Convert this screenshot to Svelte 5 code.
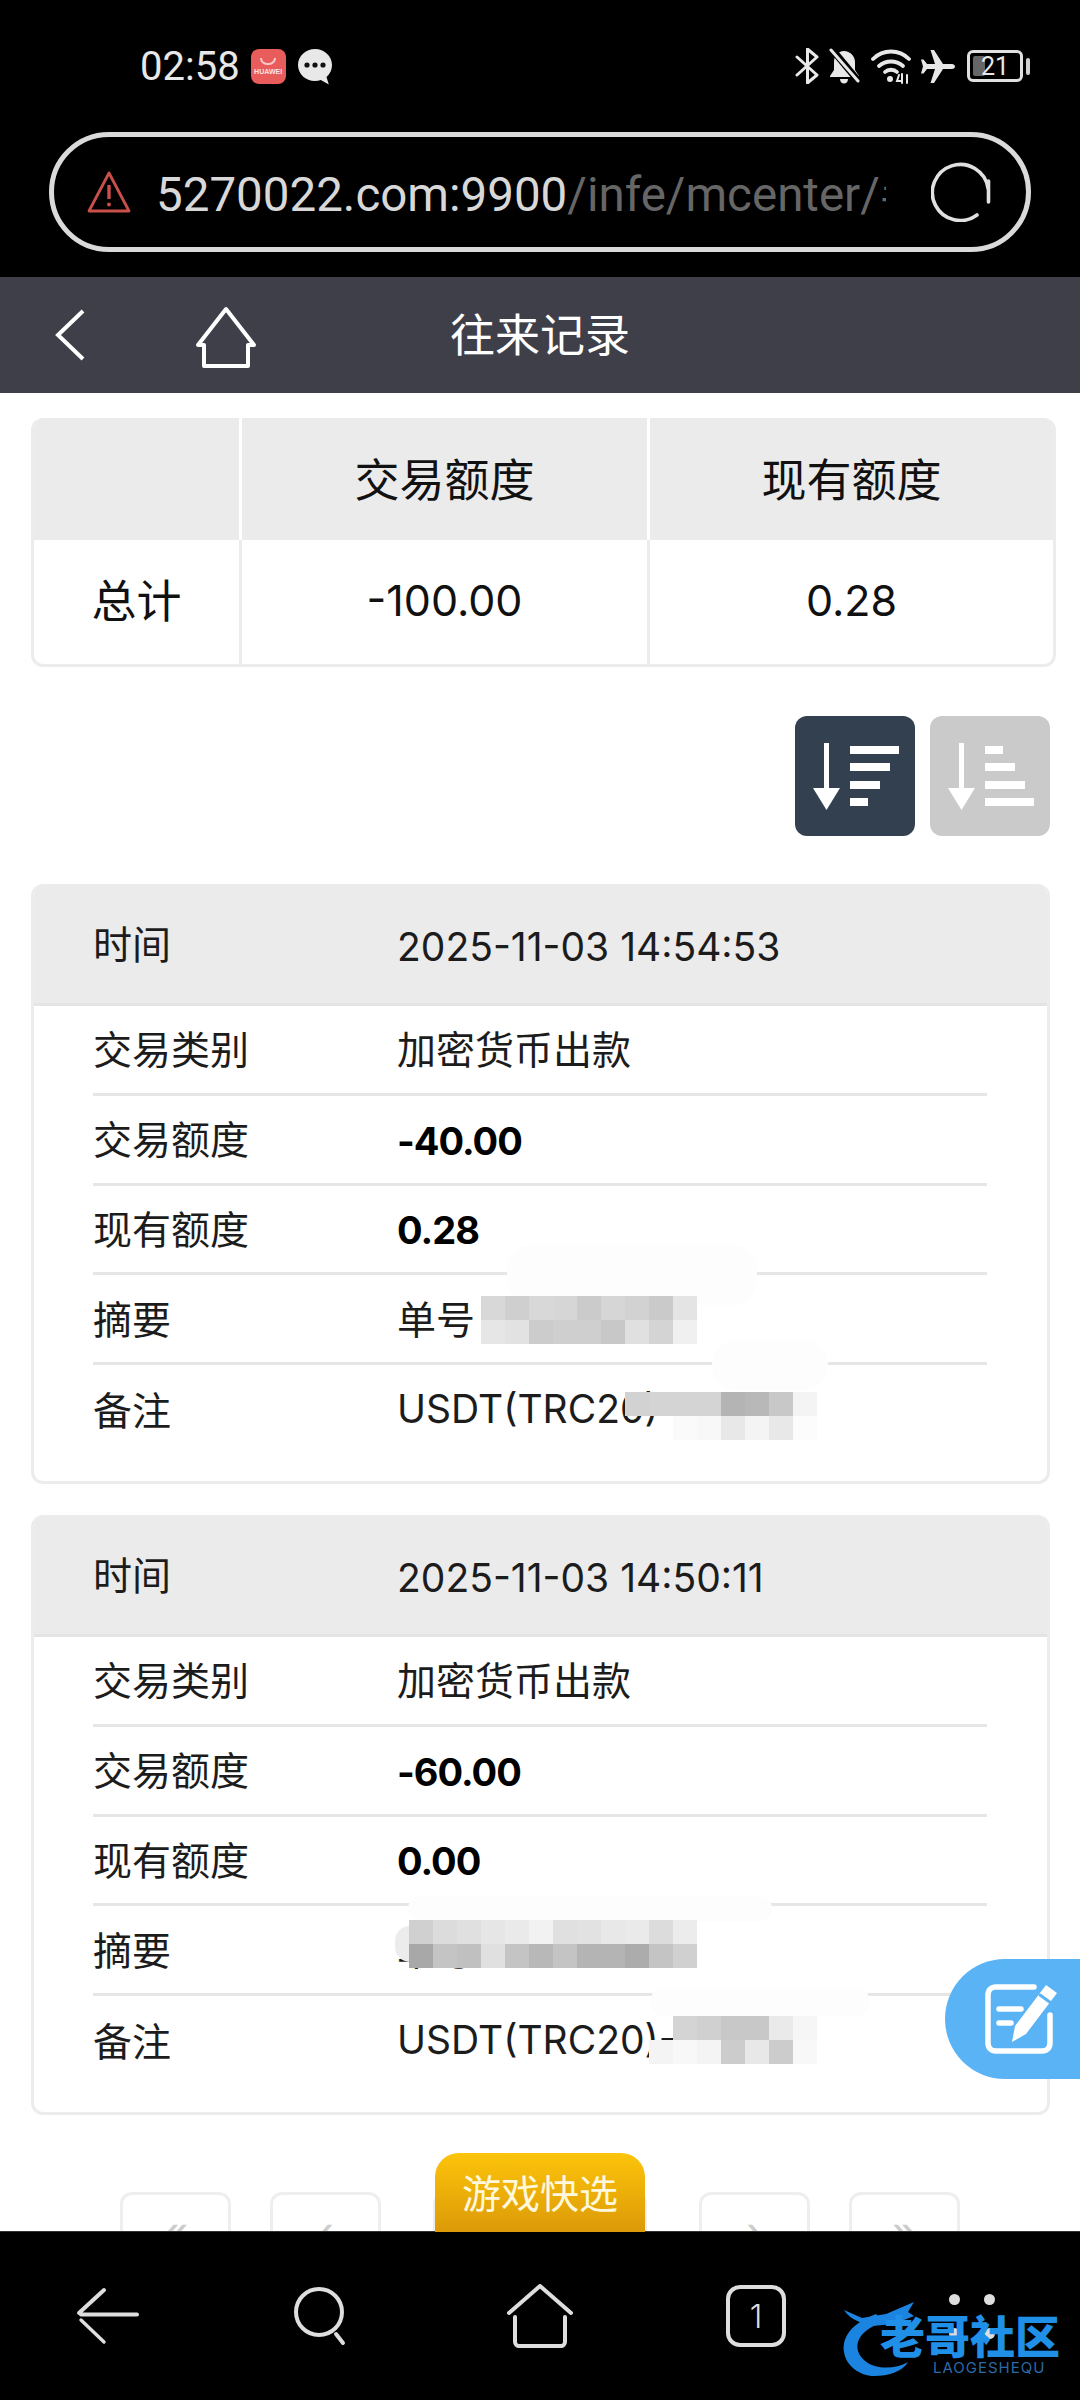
<script>
    const cards = [
        { time: "2025-11-03 14:54:53", amount: "-40.00", balance: "0.28" },
        { time: "2025-11-03 14:50:11", amount: "-60.00", balance: "0.00" },
    ];

    // redacted bits of the screenshot: smudges first, then mosaic tiles
    const smudges = [
        { x: 507, y: 1245, w: 250, h: 60, bg: "#fdfdfd" },
        { x: 712, y: 1340, w: 116, h: 50, bg: "#fdfdfd" },
        { x: 408, y: 1896, w: 364, h: 26, bg: "#fdfdfd" },
        { x: 650, y: 1988, w: 220, h: 28, bg: "#fdfdfd" },
        { x: 395, y: 1926, w: 30, h: 36, bg: "#ececec" },
    ];
    const mosaics = [
        { x: 457, y: 1296, rows: [
            ["", "d8", "cf", "d8", "d6", "cb", "d6", "d2", "ca", "e4"],
            ["", "e6", "e2", "cc", "cf", "cf", "c8", "e0", "d4", "f0"],
        ] },
        { x: 625, y: 1392, rows: [
            ["d2", "d4", "d4", "d4", "b4", "b8", "c8", "f4"],
            ["", "", "fa", "f8", "e8", "f4", "e8", "fc"],
        ] },
        { x: 409, y: 1920, rows: [
            ["d0", "dc", "e0", "e6", "ea", "f2", "e0", "e2", "e8", "ea", "dc", "ec"],
            ["a8", "c4", "c0", "e0", "c4", "b8", "c4", "b4", "b4", "ac", "c4", "d0"],
        ] },
        { x: 625, y: 2016, rows: [
            ["", "", "d4", "d0", "c8", "c8", "ea", "f6"],
            ["", "f4", "f8", "f4", "cc", "e8", "cc", "f8"],
        ] },
    ];
</script>

<div class="page">
    <div class="browser">
        <div class="status">
            <span class="clock">02:58</span>
            <span class="huawei"><i></i><b>HUAWEI</b></span>
            <svg class="bubble" viewBox="0 0 36 37" width="36" height="37">
                <path fill="#e8e8e8" d="M18 1C8.600 1 1 8 1 17s7.600 16 17 16c2 0 4-.3 5.800-1l8 4.500-2.300-7.500C33 26 35 22 35 17 35 8 27.400 1 18 1z" />
                <circle cx="10" cy="17" r="2.600" fill="#111" />
                <circle cx="18" cy="17" r="2.600" fill="#111" />
                <circle cx="26" cy="17" r="2.600" fill="#111" />
            </svg>
            <div class="status-right">
                <svg viewBox="0 0 24 36" width="24" height="36" fill="none" stroke="#e8e8e8" stroke-width="3" stroke-linecap="round" stroke-linejoin="round">
                    <path d="M2 9l20 18-9.500 8V1L22 9 2 27" />
                </svg>
                <svg viewBox="0 0 34 36" width="34" height="36">
                    <path fill="#e8e8e8" d="M16 3c-6 0-10 5-10 11v8l-4 6v1h29v-1l-4-6v-8C27 8 22 3 16 3z" />
                    <path fill="#e8e8e8" d="M12 31h8c0 3-2 4.500-4 4.500S12 34 12 31z" />
                    <path d="M3 0l29 35" stroke="#000" stroke-width="7" />
                    <path d="M3 2l27 31" stroke="#e8e8e8" stroke-width="3" stroke-linecap="round" />
                </svg>
                <svg viewBox="0 0 40 35" width="40" height="35" fill="none" stroke="#e8e8e8" stroke-width="3.800" stroke-linecap="round">
                    <path d="M2 10c10-10 26-10 36 0" />
                    <path d="M8 17c7-6 17-6 24 0" />
                    <path d="M14 23c3-3 9-3 12 0" />
                    <circle cx="19" cy="30" r="3" fill="#e8e8e8" stroke="none" />
                    <path d="M28 26l-2 6h4M31 25v9M36 26v8" stroke-width="2" />
                </svg>
                <svg viewBox="0 0 36 35" width="36" height="35">
                    <path fill="#e8e8e8" d="M35 17.500c0-1.500-1.500-2.500-3-2.500H23L14 1h-3.500L15 15H7L3.500 10.500H1L3 17.500 1 24.500h2.500L7 20h8l-4.500 14H14l9-14h9c1.500 0 3-1 3-2.500z" />
                </svg>
                <div class="battery">
                    <i></i><span>21</span>
                </div>
                <div class="battery-cap"></div>
            </div>
        </div>
        <div class="url-bar">
            <svg viewBox="0 0 44 42" width="44" height="42" fill="none" stroke="#c9504a" stroke-width="2.800" stroke-linejoin="round">
                <path d="M22 2L2 40h40z" />
                <path d="M22 14v14" stroke-width="3.400" />
                <circle cx="22" cy="33.500" r="2" fill="#c9504a" stroke="none" />
            </svg>
            <div class="url"><span class="host">5270022.com:9900</span><span class="path">/infe/mcenter/#/record</span></div>
            <svg viewBox="0 0 60 60" width="60" height="60" fill="none" stroke="#e0e0e0" stroke-width="3.600" stroke-linecap="round">
                <path d="M57 26A28 28 0 1 0 46 53" />
                <path d="M57.500 19V40" />
            </svg>
        </div>
    </div>

    <header class="title-bar">
        <svg class="back" viewBox="0 0 30 52" width="30" height="52" fill="none" stroke="#fff" stroke-width="4">
            <path d="M28 2L3 26l25 24" />
        </svg>
        <svg class="home" viewBox="0 0 62 62" width="62" height="62" fill="none" stroke="#fff" stroke-width="4" stroke-linejoin="round">
            <path d="M31 3L3 39h6v21h44V39h6z" />
        </svg>
        <h1>往来记录</h1>
    </header>

    <main>
        <div class="total">
            <div class="head"></div>
            <div class="head">交易额度</div>
            <div class="head">现有额度</div>
            <div class="cell cjk">总计</div>
            <div class="cell num">-100.00</div>
            <div class="cell num">0.28</div>
        </div>

        <div class="sort">
            <div class="sort-btn active">
                <svg viewBox="0 0 120 120" width="120" height="120" fill="#fff">
                    <path d="M29 27h5v50h-5z" />
                    <path d="M18 72h27L31.500 94z" />
                    <path d="M55 30h49v8H55zM55 47h40v8H55zM55 65h30v8H55zM55 82h18v8H55z" />
                </svg>
            </div>
            <div class="sort-btn">
                <svg viewBox="0 0 120 120" width="120" height="120" fill="#fff">
                    <path d="M29 27h5v50h-5z" />
                    <path d="M18 72h27L31.500 94z" />
                    <path d="M55 30h18v8H55zM55 47h30v8H55zM55 65h40v8H55zM55 82h49v8H55z" />
                </svg>
            </div>
        </div>

        {#each cards as card}
            <section class="card">
                <div class="row first">
                    <span class="label">时间</span>
                    <span class="value latin">{card.time}</span>
                </div>
                <div class="body">
                    <div class="row"><span class="label">交易类别</span><span class="value">加密货币出款</span></div>
                    <div class="row"><span class="label">交易额度</span><span class="value strong">{card.amount}</span></div>
                    <div class="row"><span class="label">现有额度</span><span class="value strong">{card.balance}</span></div>
                    <div class="row"><span class="label">摘要</span><span class="value">单号</span></div>
                    <div class="row"><span class="label">备注</span><span class="value">USDT(TRC20)-</span></div>
                </div>
            </section>
        {/each}

        <div class="pager">
            <div class="pg">«</div>
            <div class="pg">‹</div>
            <div class="pg wide"></div>
            <div class="pg">›</div>
            <div class="pg">»</div>
        </div>
    </main>

    <nav class="bottom">
        <svg viewBox="0 0 64 58" width="64" height="58" fill="none" stroke="#dedede" stroke-width="4" stroke-linecap="round">
            <path d="M28 3L3 26M5 27.500h56" />
            <path d="M5 33l23 22" stroke-width="3.400" />
        </svg>
        <svg viewBox="0 0 60 60" width="60" height="60" fill="none" stroke="#dedede" stroke-width="4" stroke-linecap="round">
            <circle cx="25" cy="26" r="23" />
            <path d="M42 48l7 9" />
        </svg>
        <svg viewBox="0 0 68 64" width="68" height="64" fill="none" stroke="#dedede" stroke-width="4" stroke-linecap="round" stroke-linejoin="round">
            <path d="M3 29L34 2l31 27" />
            <path d="M9 33v25c0 2 2 4 4 4h42c2 0 4-2 4-4V33" />
        </svg>
        <div class="tabs">1</div>
        <div class="dots">
            <i></i><i></i><i></i><i></i>
        </div>
    </nav>

    {#each smudges as s}
        <div class="smudge" style="left:{s.x}px;top:{s.y}px;width:{s.w}px;height:{s.h}px;background:{s.bg}"></div>
    {/each}
    {#each mosaics as m}
        <div class="mosaic" style="left:{m.x}px;top:{m.y}px">
            {#each m.rows as row}
                <div class="tile-row">
                    {#each row as g}
                        <i style="background:{g ? `#${g}${g}${g}` : 'transparent'}"></i>
                    {/each}
                </div>
            {/each}
        </div>
    {/each}

    <button class="fab" aria-label="edit">
        <svg viewBox="0 0 76 72" width="76" height="72" fill="none" stroke="#fff" stroke-width="5.500" stroke-linecap="round" stroke-linejoin="round">
            <path d="M50 4H12C7 4 4 7 4 12v48c0 5 3 8 8 8h46c5 0 8-3 8-8V32" />
            <path d="M15 26h22M15 40h12" />
            <path fill="#fff" stroke="none" d="M62 2l11 8-31 41-14 8 3-16z" />
            <path d="M56 12l11 8" stroke="#5ab3f4" stroke-width="3" />
        </svg>
    </button>

    <div class="game">游戏快选</div>

    <div class="watermark">
        <svg viewBox="0 0 110 78" width="110" height="78" fill="none">
            <path d="M34 12C8 22 0 36 2 50c2 14 16 24 30 24 14 0 28-4 34-14C52 68 30 68 20 56 10 44 16 28 42 20z" fill="#1b84e0" />
            <path d="M2 8l18 8 24-4 28-12-6 10 6 4-20 8-22 2C22 22 8 18 2 8z" fill="#1b84e0" />
        </svg>
        <b>老哥社区</b>
        <small>LAOGESHEQU</small>
    </div>
</div>

<style>
    :global(body) {
        margin: 0;
        background: #000;
    }

    .page {
        position: relative;
        display: flex;
        flex-direction: column;
        width: 1080px;
        height: 2400px;
        overflow: hidden;
        background: #fff;
        font-family: Inter, "Noto Sans CJK SC", sans-serif;
        color: #1c1c1c;
    }

    .browser {
        flex: none;
        height: 277px;
        background: #000;
    }

    .status {
        display: flex;
        align-items: center;
        height: 132px;
        padding-left: 140px;
        padding-right: 50px;
        box-sizing: border-box;
    }

    .clock {
        font-family: Roboto, sans-serif;
        font-size: 40px;
        color: #e8e8e8;
    }

    .huawei {
        display: flex;
        flex-direction: column;
        align-items: center;
        justify-content: center;
        gap: 3px;
        width: 35px;
        height: 35px;
        margin-left: 11px;
        border-radius: 8px;
        background: #e85c5c;
    }

    .huawei i {
        width: 12px;
        height: 5px;
        border: 2px solid #f9c6c6;
        border-top: 0;
        border-radius: 0 0 8px 8px;
    }

    .huawei b {
        font: 700 7px "Liberation Sans", sans-serif;
        color: #fde3e3;
    }

    .bubble {
        margin-left: 11px;
    }

    .status-right {
        display: flex;
        align-items: center;
        gap: 9px;
        margin-left: auto;
    }

    .battery {
        position: relative;
        display: flex;
        align-items: center;
        justify-content: center;
        box-sizing: border-box;
        width: 56px;
        height: 32px;
        margin-left: 2px;
        border: 3px solid #e0e0e0;
        border-radius: 6px;
    }

    .battery i {
        position: absolute;
        left: 3px;
        top: 3px;
        bottom: 3px;
        width: 12px;
        background: #666;
        border-radius: 2px;
    }

    .battery span {
        position: relative;
        font-family: Roboto, sans-serif;
        font-size: 25px;
        color: #e8e8e8;
    }

    .battery-cap {
        width: 4px;
        height: 17px;
        margin-left: -6px;
        background: #d0d0d0;
        border-radius: 2px;
    }

    .url-bar {
        display: flex;
        align-items: center;
        box-sizing: border-box;
        height: 120px;
        margin: 0 49px;
        padding: 0 35px 0 33px;
        border: 5px solid #dadada;
        border-radius: 60px;
    }

    .url {
        flex: 1;
        min-width: 0;
        margin: 0 45px 0 25px;
        padding-top: 5px;
        overflow: hidden;
        white-space: nowrap;
        font-family: Roboto, sans-serif;
        font-size: 47.500px;
    }

    .host {
        color: #d8d8d8;
    }

    .path {
        color: #666;
    }

    .title-bar {
        position: relative;
        flex: none;
        display: flex;
        align-items: center;
        height: 116px;
        background: #3f3f4a;
    }

    .back {
        margin-left: 55px;
    }

    .home {
        margin-left: 110px;
        margin-top: 4px;
    }

    h1 {
        position: absolute;
        left: 0;
        right: 0;
        margin: 0 0 5px;
        text-align: center;
        font-size: 45px;
        font-weight: 400;
        color: #fff;
    }

    main {
        flex: 1;
        min-height: 0;
        overflow: hidden;
        padding: 25px 30px 0 31px;
    }

    .total {
        display: grid;
        grid-template-columns: 205px 408px 1fr;
        box-sizing: border-box;
        width: 1025px;
        height: 249px;
        border: 3px solid #ececec;
        border-top: 0;
        border-radius: 12px;
        overflow: hidden;
        font-size: 45px;
        color: #111;
        text-align: center;
    }

    .head {
        display: flex;
        align-items: center;
        justify-content: center;
        box-sizing: border-box;
        height: 122px;
        padding-bottom: 4px;
        background: #ebebeb;
        color: #111;
    }

    .head + .head,
    .cell + .cell {
        border-left: 3px solid #fff;
    }

    .cell + .cell {
        border-left-color: #ececec;
    }

    .cell {
        display: flex;
        align-items: center;
        justify-content: center;
        box-sizing: border-box;
        height: 125px;
        padding-bottom: 5px;
    }

    .cell.cjk {
        padding-bottom: 9px;
    }

    .num {
        font-size: 43px;
    }

    .sort {
        display: flex;
        justify-content: flex-end;
        gap: 15px;
        margin: 49px 0 48px 0;
    }

    .sort-btn {
        width: 120px;
        height: 120px;
        border-radius: 12px;
        background: #cacaca;
    }

    .sort-btn.active {
        background: #33404f;
    }

    .sort-btn svg {
        display: block;
        filter: blur(0.7px);
    }

    .card {
        box-sizing: border-box;
        width: 1019px;
        height: 600px;
        margin-bottom: 31px;
        border: 3px solid #ececec;
        border-top: 0;
        border-radius: 12px;
        overflow: hidden;
    }

    .row {
        display: flex;
        align-items: center;
        box-sizing: border-box;
        height: 89.800px;
        padding-bottom: 4px;
        border-bottom: 3px solid #e6e6e6;
        font-size: 39px;
    }

    .row:last-child {
        border-bottom: 0;
    }

    .row.first {
        height: 122px;
        padding-left: 59px;
        background: #ebebeb;
        border-bottom: 3px solid #e4e4e4;
    }

    .body {
        padding: 0 60px 0 59px;
    }

    .label {
        flex: none;
        width: 304px;
    }

    .latin {
        padding-top: 9px;
    }

    .strong {
        padding-top: 7px;
        font-size: 38px;
        font-weight: 700;
        letter-spacing: -1px;
        color: #000;
    }

    .pager {
        display: flex;
        gap: 39px;
        margin: 77px 0 0 89px;
    }

    .pg {
        box-sizing: border-box;
        flex: none;
        width: 111px;
        height: 110px;
        border: 3px solid #eee;
        border-radius: 12px;
        text-align: center;
        font-size: 44px;
        line-height: 74px;
        color: #ccc;
    }

    .pg.wide {
        width: 214px;
        margin: 0 13px;
    }

    .bottom {
        flex: none;
        display: grid;
        grid-template-columns: repeat(5, 216px);
        place-items: center;
        height: 168px;
        background: #000;
        border-top: 1px solid #333;
    }

    .tabs {
        display: flex;
        align-items: center;
        justify-content: center;
        box-sizing: border-box;
        width: 60px;
        height: 62px;
        border: 4px solid #dedede;
        border-radius: 14px;
        font-size: 32px;
        font-weight: 300;
        color: #dedede;
    }

    .dots {
        display: grid;
        grid-template-columns: 11px 11px;
        column-gap: 24px;
        row-gap: 23px;
    }

    .dots i {
        height: 11px;
        border-radius: 50%;
        background: #dedede;
    }

    .smudge {
        position: absolute;
        border-radius: 24px;
    }

    .mosaic {
        position: absolute;
    }

    .tile-row {
        display: flex;
    }

    .tile-row i {
        width: 24px;
        height: 24px;
    }

    .fab {
        position: absolute;
        right: 0;
        top: 1959px;
        display: flex;
        align-items: center;
        width: 135px;
        height: 120px;
        padding: 0 0 0 39px;
        border: 0;
        border-radius: 60px 0 0 60px;
        background: #5ab3f4;
    }

    .game {
        position: absolute;
        left: 435px;
        top: 2153px;
        display: flex;
        align-items: center;
        justify-content: center;
        box-sizing: border-box;
        width: 210px;
        height: 79px;
        padding-bottom: 4px;
        border-radius: 24px 24px 0 0;
        background: linear-gradient(#fcc40a, #dc9a08);
        font-size: 39px;
        color: #fff8dc;
    }

    .watermark {
        position: absolute;
        left: 842px;
        top: 2302px;
        width: 225px;
        height: 78px;
    }

    .watermark svg {
        position: absolute;
        left: 0;
        top: 0;
    }

    .watermark b {
        position: absolute;
        left: 38px;
        top: 14px;
        font-size: 45px;
        line-height: 43px;
        font-weight: 900;
        white-space: nowrap;
        color: #1f8fe8;
    }

    .watermark small {
        position: absolute;
        left: 91px;
        top: 58px;
        font-size: 15px;
        line-height: 1;
        letter-spacing: 1px;
        color: #2a6aa8;
    }
</style>
